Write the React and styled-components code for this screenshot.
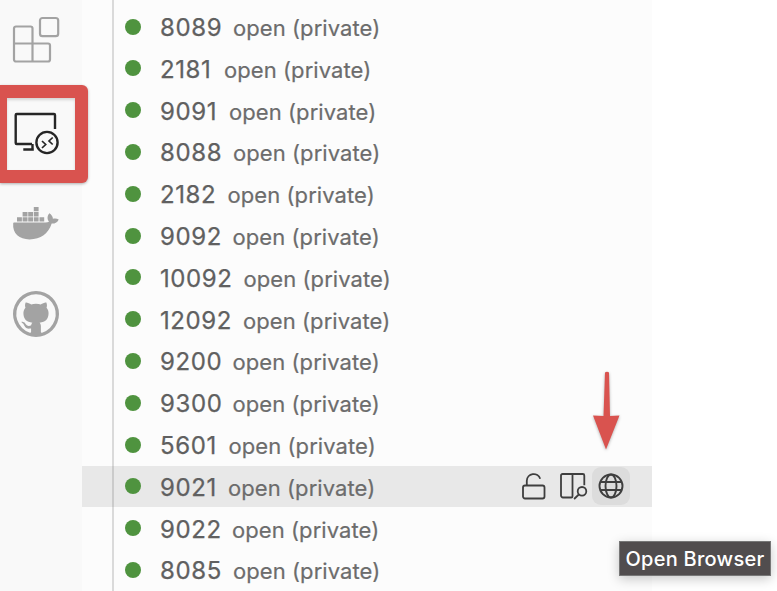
import React from "react";
import styled, { createGlobalStyle } from "styled-components";
import { VscGithub } from "react-icons/vsc";

const GlobalStyle = createGlobalStyle`
  * { box-sizing: border-box; }
  body { margin: 0; background: #fff; overflow: hidden; font-family: Inter, "Liberation Sans", sans-serif; }
`;

const Window = styled.div`
  position: relative;
  display: flex;
  width: 777px;
  height: 591px;
  overflow: hidden;
  background: #fff;
`;

const ActivityBar = styled.nav`
  display: flex;
  flex-direction: column;
  width: 82px;
  height: 100%;
  background: #f9f9f9;
  color: #a3a3a3;
`;

const Activity = styled.div`
  display: flex;
  flex: none;
  height: ${(p) => p.$height}px;
  padding: ${(p) => p.$top}px 0 0 ${(p) => p.$left ?? 12}px;
  svg { display: block; flex: none; overflow: visible; }
`;

const Highlight = styled.div`
  position: relative;
  z-index: 1;
  flex: none;
  width: 88px;
  height: 98.5px;
  padding: 13.5px 13.5px 13px 7px;
  border-radius: 0 6px 6px 0;
  background: #d9534f;
  box-shadow: 0 1px 3px rgba(0, 0, 0, 0.3);
`;

const HighlightInner = styled.div`
  height: 100%;
  padding: 14px 0 0 5px;
  background: #f9f9f9;
  box-shadow: inset 0 2px 3px rgba(0, 0, 0, 0.15);
  color: #262626;
  svg { display: block; overflow: visible; }
`;

const Ports = styled.main`
  width: 570px;
  height: 100%;
  padding-top: 5.8px;
  overflow: hidden;
  background: linear-gradient(#dadada, #dadada) 30px 0 / 2px 100% no-repeat, #fcfcfc;
`;

const PortRow = styled.div`
  display: flex;
  align-items: center;
  height: 41.8px;
  padding: 0 22px 0 43px;
  background: ${(p) => (p.$active ? "linear-gradient(#cbcbcb, #cbcbcb) 30px 0 / 2px 100% no-repeat, #e8e8e8" : "none")};
`;

const Dot = styled.span`
  flex: none;
  width: 16px;
  height: 16px;
  margin-right: 19px;
  border-radius: 50%;
  background: #4f933f;
`;

const Label = styled.div`
  display: flex;
  align-items: baseline;
  flex: 1;
  padding-top: 2.8px;
  line-height: 30px;
  white-space: nowrap;
`;

const Port = styled.span`
  flex: none;
  width: ${(p) => p.$width}px;
  color: #606060;
  font-size: 24px;
  letter-spacing: 0.6px;
  -webkit-text-stroke: 0.25px currentColor;
`;

const Status = styled.span`
  color: #6c6c6c;
  font-size: 22px;
  letter-spacing: 0.07px;
  -webkit-text-stroke: 0.2px currentColor;
`;

const Actions = styled.div`
  display: flex;
  align-items: center;
  color: #3e3e3e;
`;

const Action = styled.span`
  display: flex;
  align-items: center;
  justify-content: center;
  width: 38.5px;
  height: 38px;
  border-radius: 9px;
  background: ${(p) => (p.$hover ? "#dcdcdc" : "transparent")};
  svg { display: block; overflow: visible; }
`;

const Arrow = styled.svg`
  position: absolute;
  left: 592px;
  top: 369px;
  filter: drop-shadow(0 1px 1.5px rgba(0, 0, 0, 0.3));
`;

const Tooltip = styled.div`
  position: absolute;
  left: 619px;
  top: 541px;
  width: 152px;
  height: 35px;
  padding-left: 5.5px;
  background: #514d4e;
  border: 1px solid #777;
  box-shadow: 0 3px 12px rgba(0, 0, 0, 0.22);
  color: #fff;
  font-size: 20px;
  font-weight: 500;
  letter-spacing: 0.25px;
  line-height: 34px;
  white-space: nowrap;
`;

const ExtensionsIcon = () => (
  <svg width="48" height="48" fill="none" stroke="currentColor" strokeWidth="2.2">
    <path d="M4 9.5h14.500a2 2 0 0 1 2 2V26.500H36a2 2 0 0 1 2 2v14a2 2 0 0 1-2 2H4a2 2 0 0 1-2-2V11.500a2 2 0 0 1 2-2ZM2 26.500h18.500v18" />
    <rect x="28" y="1" width="18.200" height="18.200" rx="2.500" />
  </svg>
);

const RemoteIcon = () => (
  <svg width="48" height="48" fill="none" stroke="currentColor" strokeWidth="2.4">
    <path d="M20 32H4.700a1 1 0 0 1-1-1V3a1 1 0 0 1 1-1h37.300a1 1 0 0 1 1 1V17M11.300 37.500h10.500M20.500 32v5.500" />
    <circle cx="35" cy="30.500" r="10.600" />
    <path strokeWidth="1.700" d="m30 29 3.700 3.500-3.700 3.500M40.700 25.500l-3.700 3.500 3.700 3.500" />
  </svg>
);

const DockerIcon = () => (
  <svg width="48" height="34" fill="currentColor">
    <path d="M21.800 0h4.800v4.300h-4.800zM10.600 5.100h4.900v4.300h-4.900zM16.200 5.100h4.800v4.300h-4.800zM21.800 5.100h4.800v4.300h-4.800zM5 10.200h4.900v4.300H5zM10.600 10.200h4.900v4.300h-4.900zM16.200 10.200h4.800v4.300h-4.800zM21.800 10.200h4.800v4.300h-4.800zM27.500 10.200h4.700v4.300h-4.700z" />
    <path d="M2 15.500h31.500c1.500 0 2.600-.3 3.500-.8-2.300-2.800-1.600-6.300.5-8.400 2.200 1.800 3.400 3.500 3.400 5.500 2.100-.6 4.200-.3 5.800.6-.9 2.800-3.500 4.300-7 4.200C36.200 27 29 32.400 17.500 32.400 7.500 32.400.3 27 1.200 16.300c.1-.5.3-.8.8-.8Z" />
  </svg>
);

const UnlockIcon = () => (
  <svg width="24" height="27" fill="none" stroke="currentColor" strokeWidth="1.800">
    <rect x="1" y="12.500" width="21.500" height="13" rx="2" />
    <path d="M4.800 12.500V7.700a6.900 6.900 0 0 1 13.400-2" />
  </svg>
);

const PreviewIcon = () => (
  <svg width="27" height="27" fill="none" stroke="currentColor" strokeWidth="1.800">
    <path d="M13.500 1v22.200a1.300 1.300 0 0 1-1.300 1.300H4a2 2 0 0 1-2-2V2.500A1.500 1.500 0 0 1 3.500 1h20.300a1.500 1.500 0 0 1 1.500 1.500v9.800" />
    <circle cx="23" cy="18.300" r="4.300" />
    <path d="m19.800 21.500-4.700 4.500" />
  </svg>
);

const GlobeIcon = () => (
  <svg width="26" height="26" fill="none" stroke="currentColor" strokeWidth="1.900">
    <circle cx="13" cy="13" r="11.500" />
    <ellipse cx="13" cy="13" rx="5.500" ry="11.500" />
    <path d="M2.500 9h21M2.500 17h21" />
  </svg>
);

const ports = ["8089", "2181", "9091", "8088", "2182", "9092", "10092", "12092", "9200", "9300", "5601", "9021", "9022", "8085"];
const labelWidths = { 8089: 73, 2181: 64, 9091: 69, 8088: 73, 2182: 67.5, 9092: 72.5, 10092: 83.5, 12092: 83, 9200: 72.5, 9300: 72.5, 5601: 68.5, 9021: 68, 9022: 72, 8085: 73 };

export default function App() {
  return (
    <>
      <GlobalStyle />
      <Window>
        <ActivityBar>
          <Activity $height={84.5} $top={17}><ExtensionsIcon /></Activity>
          <Highlight><HighlightInner><RemoteIcon /></HighlightInner></Highlight>
          <Activity $height={107} $top={24}><DockerIcon /></Activity>
          <Activity $height={60} $top={0.5} $left={13}><VscGithub size={46} /></Activity>
        </ActivityBar>
        <Ports>
          {ports.map((port) => (
            <PortRow key={port} $active={port === "9021"}>
              <Dot />
              <Label>
                <Port $width={labelWidths[port]}>{port}</Port>
                <Status>open (private)</Status>
              </Label>
              {port === "9021" && (
                <Actions>
                  <Action><UnlockIcon /></Action>
                  <Action><PreviewIcon /></Action>
                  <Action $hover><GlobeIcon /></Action>
                </Actions>
              )}
            </PortRow>
          ))}
        </Ports>
        <Arrow width="30" height="84" fill="#d9534f">
          <path d="M13 3.500q2-1.500 4 0l1 43.500 9.500-.5-13.500 34L1 46.500l10.500.5Z" />
        </Arrow>
        <Tooltip>Open Browser</Tooltip>
      </Window>
    </>
  );
}
